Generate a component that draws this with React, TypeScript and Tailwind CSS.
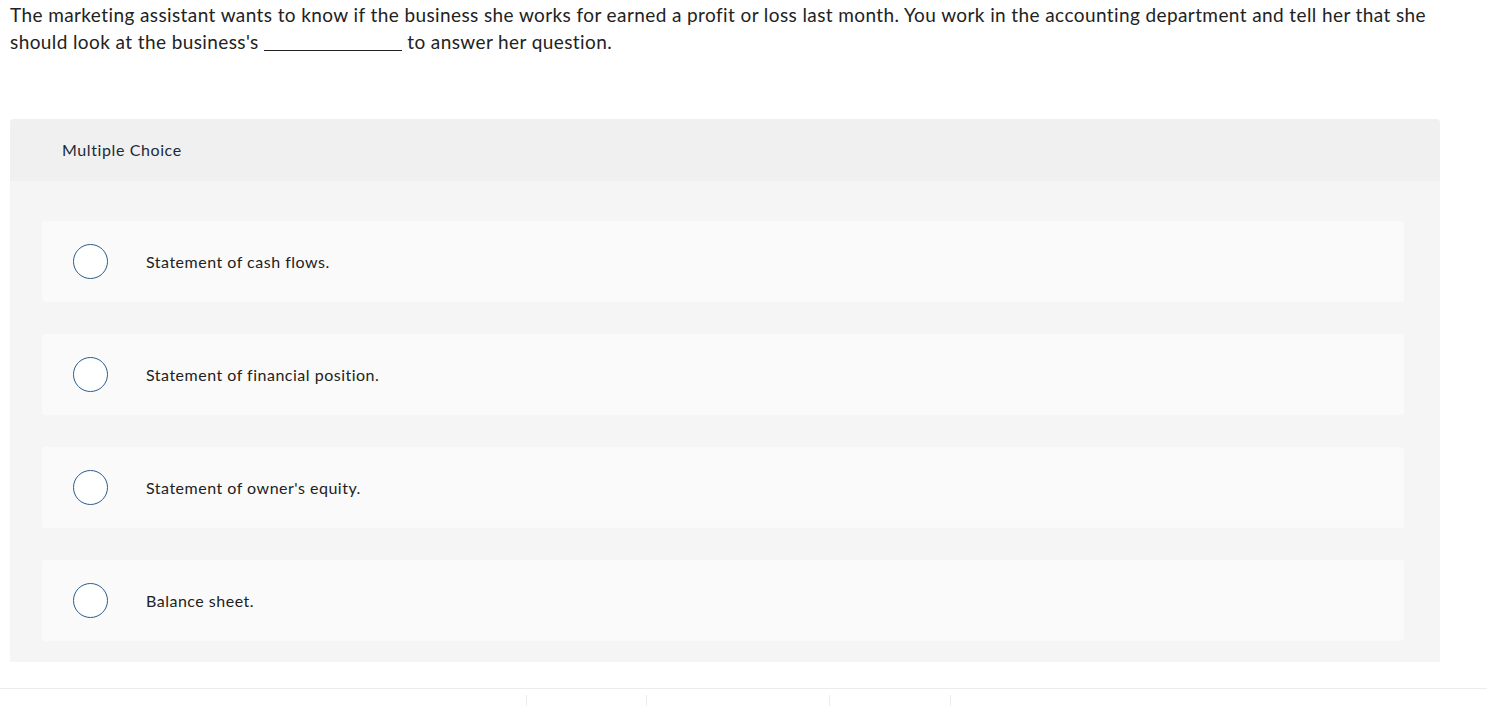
const options = [
  "Statement of cash flows.",
  "Statement of financial position.",
  "Statement of owner's equity.",
  "Balance sheet.",
];

const Radio = () => (
  <span className="block w-[35px] h-[35px] shrink-0 rounded-full border-[1.5px] border-[#2c5c8c] bg-white" />
);

export default function App() {
  return (
    <div className="min-h-[706px] bg-white text-[#222] font-['Lato',sans-serif]">
      <p className="px-[10px] pt-[1px] text-[19px] leading-[27px] tracking-[0.4px]">
        The marketing assistant wants to know if the business she works for earned a profit or loss last month. You work in the accounting department and tell her that she should look at the business's{" "}
        <span className="inline-block w-[138px] h-px bg-[#222] align-[-2px]" /> to answer her question.
      </p>

      <div className="ml-[10px] mt-[64px] w-[1430px] rounded-t overflow-hidden">
        <div className="h-[62px] bg-[#f0f0f0] flex items-center pl-[52px] text-[16px] tracking-[0.6px] text-[#1c2a3a]">
          Multiple Choice
        </div>
        <div className="bg-[#f5f5f5] pt-[40px] pb-[21px] pl-[32px] pr-[36px] flex flex-col gap-[32px]">
          {options.map((o) => (
            <label key={o} className="h-[81px] rounded bg-[#fafafa] flex items-center pl-[31px] cursor-pointer">
              <Radio />
              <span className="ml-[38px] text-[16px] tracking-[0.5px] text-[#222]">{o}</span>
            </label>
          ))}
        </div>
      </div>

      <div className="mt-[26px] border-t border-[#ececec] flex pt-[6px]">
        <div className="w-[526px]" />
        <div className="w-[120px] h-[11px] border-l border-[#ececec]" />
        <div className="w-[183px] h-[11px] border-l border-[#ececec]" />
        <div className="w-[121px] h-[11px] border-l border-[#ececec]" />
        <div className="h-[11px] border-l border-[#ececec]" />
      </div>
    </div>
  );
}
